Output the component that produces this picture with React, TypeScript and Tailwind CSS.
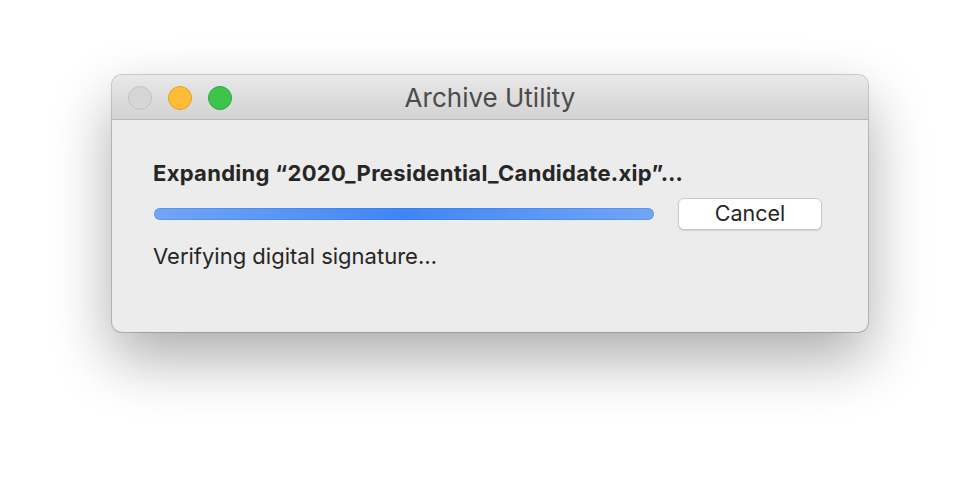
export default function App() {
  return (
    <div className="w-[980px] h-[480px] bg-white flex justify-center pt-[75px] font-['Inter','Liberation_Sans',sans-serif]">
      <div className="w-[756px] h-[257px] rounded-[10px] bg-[#ececec] flex flex-col overflow-hidden shadow-[0_0_0_1px_rgba(0,0,0,0.18),0_26px_60px_rgba(0,0,0,0.33)]">
        {/* Title bar */}
        <div className="relative h-[45px] shrink-0 bg-gradient-to-b from-[#e9e9e9] to-[#d2d2d2] border-b border-[#b8b8b8] flex items-center justify-center">
          <div className="absolute left-[16px] top-[11px] flex gap-[16px]">
            <span className="w-[24px] h-[24px] rounded-full bg-[#d6d6d6] border border-[#c2c2c2]" />
            <span className="w-[24px] h-[24px] rounded-full bg-[#fdbb36] border border-[#e0a22b]" />
            <span className="w-[24px] h-[24px] rounded-full bg-[#3dc44b] border border-[#2da83a]" />
          </div>
          <span className="text-[26px] leading-none text-[#4b4b4b] mt-[2px]">Archive Utility</span>
        </div>

        {/* Body */}
        <div className="flex flex-col pl-[41px] pr-[46px] pt-[40px]">
          <div className="text-[22px] leading-[26px] font-bold text-[#262626] tracking-[0.3px]">
            Expanding “2020_Presidential_Candidate.xip”…
          </div>
          <div className="mt-[12px] flex items-center gap-[24px]">
            <div className="ml-[1px] w-[500px] h-[12px] rounded-full bg-gradient-to-r from-[#72a6f6] via-[#3f86f4] to-[#72a6f6] shadow-[inset_0_0_0_1px_rgba(40,100,210,0.25)]" />
            <button className="w-[144px] h-[32px] rounded-[6px] bg-white border border-[#c9c9c9] shadow-[0_1px_1px_rgba(0,0,0,0.12)] text-[21.5px] text-[#262626] leading-none">
              Cancel
            </button>
          </div>
          <div className="mt-[13px] text-[22px] leading-[26px] text-[#262626]">Verifying digital signature…</div>
        </div>
      </div>
    </div>
  )
}
